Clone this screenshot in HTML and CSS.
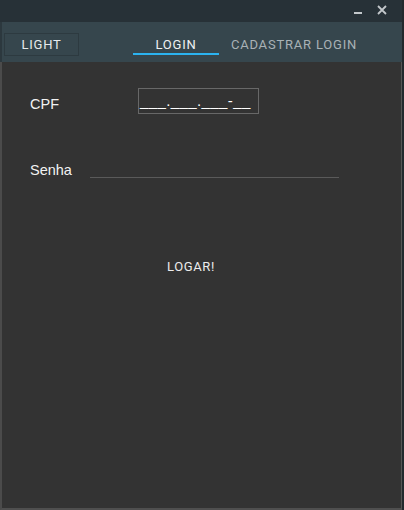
FILE: index.html
```html
<!DOCTYPE html>
<html>
<head>
<meta charset="utf-8">
<link rel="stylesheet" href="styles.css">
</head>
<body>
<div class="window">
  <div class="main">
    <div class="titlebar">
      <svg class="ico" width="10" height="10" viewBox="0 0 10 10"><rect x="1" y="7" width="8" height="2" fill="#c3c8cb"/></svg>
      <svg class="ico close" width="10" height="10" viewBox="0 0 10 10"><path d="M1 1 L9 9 M9 1 L1 9" stroke="#c3c8cb" stroke-width="1.8"/></svg>
    </div>
    <div class="tabbar">
      <div class="light-btn">LIGHT</div>
      <div class="tabs">
        <div class="tab active">LOGIN</div>
        <div class="tab">CADASTRAR LOGIN</div>
      </div>
    </div>
    <div class="content">
      <div class="row cpf-row">
        <div class="label cpf-label">CPF</div>
        <div class="cpf-input">___.___.___-__</div>
      </div>
      <div class="row senha-row">
        <div class="label senha-label">Senha</div>
        <div class="senha-field"></div>
      </div>
      <div class="btn-row">
        <div class="logar">LOGAR!</div>
      </div>
    </div>
  </div>
  <div class="edge"></div>
</div>
</body>
</html>
```
FILE: styles.css
```css
* { box-sizing: border-box; }
html, body { margin: 0; padding: 0; }
body {
  width: 404px;
  height: 510px;
  overflow: hidden;
  background: #333333;
  font-family: Roboto, "Liberation Sans", sans-serif;
}
.window {
  display: flex;
  width: 404px;
  height: 510px;
}
.main {
  flex: 1;
  display: flex;
  flex-direction: column;
}
.edge {
  width: 2px;
  background: #22292d;
}
.titlebar {
  height: 22px;
  background: #273137;
  display: flex;
  justify-content: flex-end;
  align-items: flex-start;
  padding-top: 5px;
  padding-right: 15px;
  gap: 14px;
}
.ico { display: block; }
.tabbar {
  height: 40px;
  background: #36464d;
  border-left: 2px solid #2c383e;
  display: flex;
  align-items: flex-start;
}
.light-btn {
  margin-top: 11px;
  margin-left: 2px;
  width: 75px;
  height: 23px;
  border: 1px solid #2d3a40;
  color: #e6eaec;
  font-weight: 400;
  font-size: 13px;
  letter-spacing: 0.8px;
  display: flex;
  align-items: center;
  justify-content: center;
  padding-bottom: 1px;
}
.tabs {
  display: flex;
  margin-left: 54px;
}
.tab {
  height: 33px;
  padding-top: 15px;
  color: #a9b2b6;
  font-weight: 400;
  font-size: 13px;
  letter-spacing: 0.8px;
  text-align: center;
  line-height: 15px;
  border-bottom: 2px solid transparent;
}
.tab.active {
  width: 86px;
  color: #eef1f2;
  border-bottom-color: #2bb3f0;
}
.tab:not(.active) {
  width: 150px;
}
.content {
  flex: 1;
  background: #333333;
  border-left: 2px solid #4b4b4b;
  border-right: 1px solid #555;
  border-bottom: 2px solid #4f4f4f;
  padding-left: 28px;
}
.row {
  display: flex;
}
.label {
  color: #f2f2f2;
  font-family: "Liberation Sans", Arial, sans-serif;
  font-size: 14px;
}
.cpf-row {
  margin-top: 26px;
  height: 26px;
  align-items: flex-start;
}
.cpf-label {
  width: 108px;
  padding-top: 8px;
  font-size: 14.5px;
}
.cpf-input {
  width: 121px;
  height: 26px;
  border: 1px solid #686868;
  color: #ffffff;
  font-family: "Liberation Sans", Arial, sans-serif;
  font-size: 15px;
  letter-spacing: 0.4px;
  padding-left: 1px;
  padding-top: 3px;
  white-space: nowrap;
  overflow: hidden;
}
.senha-row {
  margin-top: 48px;
  align-items: flex-start;
}
.senha-label {
  width: 60px;
  font-size: 14.5px;
}
.senha-field {
  width: 249px;
  height: 16px;
  border-bottom: 1px solid #5a5a5a;
}
.btn-row {
  display: flex;
  margin-top: 81px;
  padding-left: 137px;
}
.logar {
  color: #ececec;
  font-weight: 400;
  font-size: 13px;
  letter-spacing: 0.6px;
}
```
